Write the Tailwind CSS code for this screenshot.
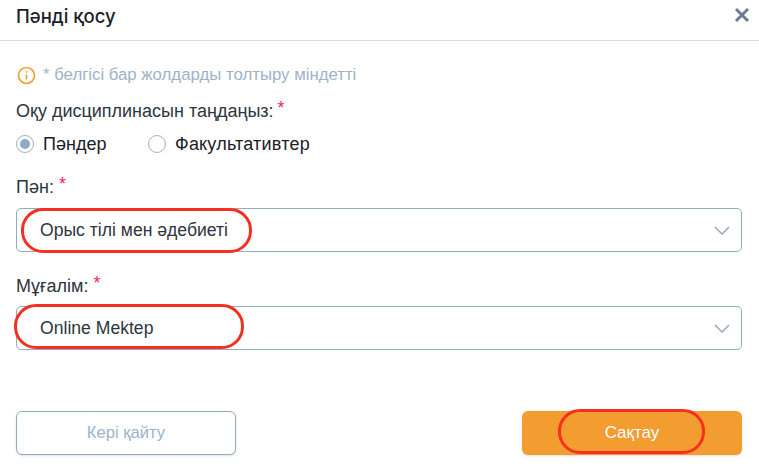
<!DOCTYPE html>
<html lang="kk">
<head>
  <meta charset="UTF-8" />
  <meta name="viewport" content="width=device-width, initial-scale=1.0" />
  <title>Пәнді қосу</title>
  <script src="https://cdn.jsdelivr.net/npm/@tailwindcss/browser@4"></script>
</head>
<body class="bg-white font-['Liberation_Sans',sans-serif] text-[18px] text-[#2d3540]">
  <div class="w-[759px] h-[469px] overflow-hidden flex flex-col">
    <header class="h-[41px] shrink-0 border-b border-[#d8dde3] pl-4 pr-[9px] flex items-center justify-between">
      <h1 class="font-['Inter',sans-serif] text-[18.5px] font-medium text-[#1c2026] -mt-[7px]">Пәнді қосу</h1>
      <svg class="w-[16px] h-[16px] -mt-[10px]" viewBox="0 0 16 16" fill="none" stroke="#6f7b94" stroke-width="3"><path d="M2 2l12 12M14 2L2 14" /></svg>
    </header>

    <main class="flex-1 pl-4 pr-[17px] flex flex-col">
      <div class="h-[20px] mt-[24px] flex items-center gap-[7px]">
        <svg class="w-[19px] h-[19px] ml-[1px]" viewBox="0 0 19 19" fill="none" stroke="#f39c2f" stroke-width="1.6"><circle cx="9.5" cy="9.5" r="8" /><path d="M9.5 8.5v5M9.5 5.2v1.6" /></svg>
        <span class="text-[16.8px] text-[#9db3c8]">* белгісі бар жолдарды толтыру міндетті</span>
      </div>

      <div class="mt-[16px] h-[20px] flex items-center">
        <span>Оқу дисциплинасын таңдаңыз:</span><span class="text-[#f0246e] ml-[4px] -mt-[6px]">*</span>
      </div>

      <div class="mt-[13px] h-[20px] flex items-center">
        <label class="flex items-center gap-[9px] w-[132px] text-[#1c2026]">
          <span class="w-[18px] h-[18px] rounded-full border border-[#9db3c8] flex items-center justify-center"><span class="w-[10px] h-[10px] rounded-full bg-[#93a9bf]"></span></span>
          Пәндер
        </label>
        <label class="flex items-center gap-[9px] text-[#1c2026] tracking-[0.2px]">
          <span class="w-[18px] h-[18px] rounded-full border border-[#9db3c8]"></span>
          Факультативтер
        </label>
      </div>

      <div class="mt-[23px] h-[20px] flex items-center">
        <span>Пән:</span><span class="text-[#f0246e] ml-[5px] -mt-[6px]">*</span>
      </div>
      <div class="relative mt-[11px] h-[44px] border border-[#93aabf] rounded-[5px] pl-[23px] pr-[11px] flex items-center justify-between">
        <span class="text-[17.6px]">Орыс тілі мен әдебиеті</span>
        <svg class="w-[16px] h-[9px]" viewBox="0 0 16 9" fill="none" stroke="#93aabf" stroke-width="1.5"><path d="M1 1l7 7 7-7" /></svg>
        <span class="absolute left-[4px] top-[-1px] w-[231px] h-[45px] border-[3px] border-[#f6301f] rounded-[22px]"></span>
      </div>

      <div class="mt-[24px] h-[20px] flex items-center">
        <span>Мұғалім:</span><span class="text-[#f0246e] ml-[5px] -mt-[6px]">*</span>
      </div>
      <div class="relative mt-[10px] h-[44px] border border-[#93aabf] rounded-[5px] pl-[23px] pr-[11px] flex items-center justify-between">
        <span class="text-[17.6px]">Online Mektep</span>
        <svg class="w-[16px] h-[9px]" viewBox="0 0 16 9" fill="none" stroke="#93aabf" stroke-width="1.5"><path d="M1 1l7 7 7-7" /></svg>
        <span class="absolute left-[-3px] top-[-3px] w-[230px] h-[45px] border-[3px] border-[#f6301f] rounded-[22px]"></span>
      </div>

      <div class="mt-[61px] flex justify-between">
        <button class="w-[220px] h-[44px] border border-[#93aabf] rounded-[6px] bg-white text-[16.6px] text-[#9db3c8] shadow-sm">Кері қайту</button>
        <button class="relative w-[220px] h-[44px] rounded-[6px] bg-[#f39c2f] text-[17px] text-white shadow-sm">
          Сақтау
          <span class="absolute left-[36px] top-[-2px] w-[147px] h-[45px] border-[3px] border-[#f6301f] rounded-[22px]"></span>
        </button>
      </div>
    </main>
  </div>
</body>
</html>
